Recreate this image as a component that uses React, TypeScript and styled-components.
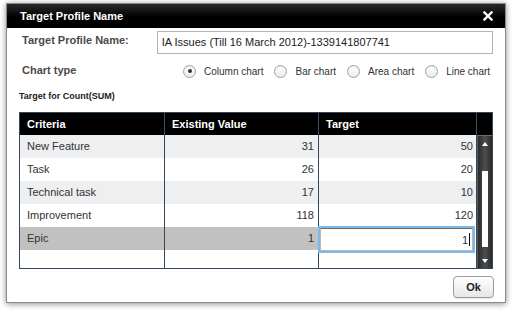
import styled, { createGlobalStyle } from "styled-components";

const GlobalStyle = createGlobalStyle`
  html, body {
    margin: 0;
    padding: 0;
    background: #fff;
  }
  body {
    font-family: "Liberation Sans", Arial, Helvetica, sans-serif;
    color: #333;
  }
`;

const Page = styled.div`
  width: 513px;
  height: 312px;
  box-sizing: border-box;
  padding: 3px 0 0 6px;
`;

const Dialog = styled.div`
  width: 500px;
  height: 300px;
  box-sizing: border-box;
  border: 1px solid #8a8a8a;
  background: #fff;
  box-shadow: 0 1px 6px rgba(0, 0, 0, 0.45);
  display: flex;
  flex-direction: column;
`;

const TitleBar = styled.div`
  height: 24px;
  flex: none;
  display: flex;
  align-items: center;
  justify-content: space-between;
  padding: 0 12px 0 13px;
  background: linear-gradient(#2a2a2a, #000 55%);
  color: #fff;
  font-size: 11px;
  font-weight: bold;
`;

const CloseIcon = styled.svg`
  display: block;
`;

const Body = styled.div`
  padding: 3px 12px 0 12px;
  display: flex;
  flex-direction: column;
`;

const FieldRow = styled.div`
  display: flex;
  align-items: flex-start;
  height: 23px;
`;

const FieldLabel = styled.div`
  width: 135px;
  margin-left: 3px;
  padding-top: 2px;
  font-size: 11px;
  line-height: 14px;
  font-weight: bold;
  color: #4a4a4a;
`;

const TextBox = styled.div`
  width: 337px;
  height: 23px;
  box-sizing: border-box;
  border: 1px solid #b4b4b4;
  padding: 0 4px;
  font-size: 11px;
  line-height: 21px;
  color: #222;
`;

const ChartRow = styled.div`
  display: flex;
  align-items: center;
  height: 18px;
  margin-top: 8px;
`;

const ChartLabel = styled(FieldLabel)`
  padding-top: 0;
  margin-top: -2px;
`;

const RadioGroup = styled.div`
  display: flex;
  align-items: center;
  gap: 11px;
  margin-left: 26px;
`;

const RadioItem = styled.label`
  display: flex;
  align-items: center;
  gap: 8px;
  font-size: 10px;
  color: #333;
`;

const RadioCircle = styled.span<{ $checked?: boolean }>`
  width: 13px;
  height: 13px;
  box-sizing: border-box;
  border-radius: 50%;
  border: 1px solid #a0a0a0;
  background: linear-gradient(#fff, #ececec);
  box-shadow: inset 0 1px 1px rgba(0, 0, 0, 0.08);
  display: flex;
  align-items: center;
  justify-content: center;

  &::after {
    content: "";
    width: 4px;
    height: 4px;
    border-radius: 50%;
    background: #333;
    display: ${(p) => (p.$checked ? "block" : "none")};
  }
`;

const SectionTitle = styled.div`
  margin-top: 10px;
  font-size: 9px;
  line-height: 12px;
  font-weight: bold;
  color: #222;
`;

const GridFrame = styled.div`
  margin-top: 10px;
  height: 157px;
  box-sizing: border-box;
  border: 1px solid #33465a;
  display: flex;
`;

const DataArea = styled.div`
  width: 457px;
  display: flex;
  flex-direction: column;
`;

const Row = styled.div<{ $bg?: string; $h?: number }>`
  display: grid;
  grid-template-columns: 145px 154px 158px;
  height: ${(p) => (p.$h ? `${p.$h}px` : "23px")};
  flex: ${(p) => (p.$h ? "none" : "none")};
  background: ${(p) => p.$bg || "#fff"};
`;

const FillRow = styled(Row)`
  flex: 1;
`;

const HeaderCell = styled.div`
  border-right: 1px solid #3d4f60;
  padding-left: 7px;
  font-size: 11px;
  font-weight: bold;
  color: #fff;
  line-height: 22px;
  white-space: nowrap;
`;

const Cell = styled.div<{ $right?: boolean; $pad?: number }>`
  border-right: 1px solid #33465a;
  font-size: 11px;
  line-height: 23px;
  white-space: nowrap;
  text-align: ${(p) => (p.$right ? "right" : "left")};
  padding: ${(p) => (p.$right ? `0 ${p.$pad ?? 4}px 0 0` : "0 0 0 7px")};
`;

const EditCell = styled.div`
  border-right: 1px solid #33465a;
  background: #fff;
`;

const EditBox = styled.div`
  position: relative;
  z-index: 1;
  width: 153px;
  height: 23px;
  margin: 1px 0 0 1px;
  box-sizing: border-box;
  border: 1px solid #b8b8b8;
  border-top-color: #6a6a6a;
  box-shadow: 0 0 0 2px #7db8e8;
  background: #fff;
  display: flex;
  align-items: center;
  justify-content: flex-end;
  padding-right: 2px;
  font-size: 11px;
  color: #333;
`;

const Caret = styled.span`
  width: 1px;
  height: 13px;
  margin-left: 1px;
  background: #111;
`;

const ScrollColumn = styled.div`
  width: 15px;
  display: flex;
  flex-direction: column;
`;

const ScrollHead = styled.div`
  height: 22px;
  background: #000;
`;

const ScrollTrack = styled.div`
  flex: 1;
  display: flex;
  flex-direction: column;
  align-items: center;
  border-top: 1px solid #6e6e6e;
  border-left: 1px solid #5a5a5a;
  background: linear-gradient(to right, #2b2b2b, #4e4e4e 50%, #2b2b2b);
`;

const ArrowBox = styled.div`
  height: 15px;
  width: 100%;
  display: flex;
  align-items: center;
  justify-content: center;
`;

const Trough = styled.div`
  flex: 1;
  padding-top: 20px;
`;

const Thumb = styled.div`
  width: 6px;
  height: 76px;
  background: #fff;
`;

const Footer = styled.div`
  margin-top: 7px;
  display: flex;
  justify-content: flex-end;
  margin-right: -1px;
`;

const OkButton = styled.button`
  width: 41px;
  height: 22px;
  padding: 0;
  border: 1px solid #9c9c9c;
  border-radius: 4px;
  background: linear-gradient(#fff, #e6e6e6);
  box-shadow: 0 1px 1px rgba(0, 0, 0, 0.1);
  font-family: inherit;
  font-size: 11px;
  font-weight: bold;
  color: #222;
`;

type GridRow = { name: string; existing: number; target: number };

const rows: GridRow[] = [
  { name: "New Feature", existing: 31, target: 50 },
  { name: "Task", existing: 26, target: 20 },
  { name: "Technical task", existing: 17, target: 10 },
  { name: "Improvement", existing: 118, target: 120 },
  { name: "Epic", existing: 1, target: 1 },
];

const charts = ["Column chart", "Bar chart", "Area chart", "Line chart"];

export default function App() {
  return (
    <Page>
      <GlobalStyle />
      <Dialog>
        <TitleBar>
          <span>Target Profile Name</span>
          <CloseIcon width="10" height="10" viewBox="0 0 10 10">
            <path d="M1.5 1.5 L8.5 8.5 M8.5 1.5 L1.5 8.5" stroke="#fff" strokeWidth="2.4" strokeLinecap="square" />
          </CloseIcon>
        </TitleBar>
        <Body>
          <FieldRow>
            <FieldLabel>Target Profile Name:</FieldLabel>
            <TextBox>IA Issues (Till 16 March 2012)-1339141807741</TextBox>
          </FieldRow>
          <ChartRow>
            <ChartLabel>Chart type</ChartLabel>
            <RadioGroup>
              {charts.map((c, i) => (
                <RadioItem key={c}>
                  <RadioCircle $checked={i === 0} />
                  {c}
                </RadioItem>
              ))}
            </RadioGroup>
          </ChartRow>
          <SectionTitle>Target for Count(SUM)</SectionTitle>
          <GridFrame>
            <DataArea>
              <Row $h={22} $bg="#000">
                <HeaderCell>Criteria</HeaderCell>
                <HeaderCell>Existing Value</HeaderCell>
                <HeaderCell>Target</HeaderCell>
              </Row>
              {rows.map((r, i) => {
                const selected = r.name === "Epic";
                const bg = selected ? "#c1c1c1" : i % 2 === 0 ? "#eeeff1" : "#fff";
                return (
                  <Row key={r.name} $bg={bg}>
                    <Cell>{r.name}</Cell>
                    <Cell $right>{r.existing}</Cell>
                    {selected ? (
                      <EditCell>
                        <EditBox>
                          {r.target}
                          <Caret />
                        </EditBox>
                      </EditCell>
                    ) : (
                      <Cell $right $pad={3}>{r.target}</Cell>
                    )}
                  </Row>
                );
              })}
              <FillRow>
                <Cell />
                <Cell />
                <Cell />
              </FillRow>
            </DataArea>
            <ScrollColumn>
              <ScrollHead />
              <ScrollTrack>
                <ArrowBox>
                  <svg width="6" height="4" viewBox="0 0 6 4">
                    <path d="M0 4 L3 0 L6 4 Z" fill="#fff" />
                  </svg>
                </ArrowBox>
                <Trough>
                  <Thumb />
                </Trough>
                <ArrowBox>
                  <svg width="6" height="4" viewBox="0 0 6 4">
                    <path d="M0 0 L6 0 L3 4 Z" fill="#fff" />
                  </svg>
                </ArrowBox>
              </ScrollTrack>
            </ScrollColumn>
          </GridFrame>
          <Footer>
            <OkButton>Ok</OkButton>
          </Footer>
        </Body>
      </Dialog>
    </Page>
  );
}
